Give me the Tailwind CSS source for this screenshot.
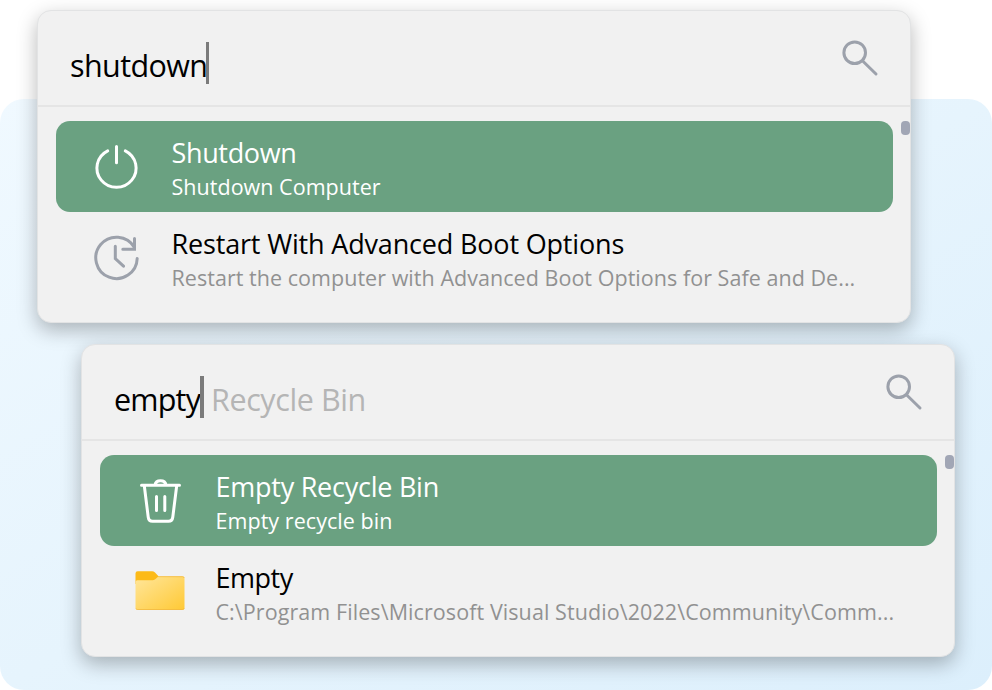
<!DOCTYPE html>
<html lang="en">
<head>
<meta charset="utf-8">
<title>Launcher</title>
<script src="https://cdn.jsdelivr.net/npm/@tailwindcss/browser@4"></script>
</head>
<body class="relative h-[690px] w-[992px] overflow-hidden bg-white font-['Open_Sans','Noto_Sans',sans-serif] whitespace-nowrap">
<div class="absolute inset-x-0 top-[99px] bottom-0 rounded-[24px] bg-linear-to-br from-[#f0f9ff] via-[#e6f4fd] to-[#dceffc]"></div>

<main class="relative flex flex-col gap-[21px] pt-[10px]">
  <section class="relative ml-[37px] h-[313px] w-[874px] rounded-[14px] border border-[#e2e3e4] bg-[#f1f1f1] shadow-[0_7px_20px_rgba(0,0,0,0.28)]">
    <header class="flex h-[96px] justify-between border-b-2 border-[#e5e5e5] pl-[32px] pr-[31px]">
      <div class="flex pt-[31px]">
        <span class="mt-[2px] w-[136px] text-[30.5px] leading-[42px] tracking-[-0.6px] text-black">shutdown</span>
        <span class="h-[42px] w-[3px] bg-[#7b7b7b]"></span>
      </div>
      <svg class="mt-[28px] size-[38px]" viewBox="0 0 38 38" fill="none" stroke="#9ca1ab" stroke-width="3" stroke-linecap="round"><circle cx="13.7" cy="13.7" r="10.8"/><path d="M21.700 22L35 35"/></svg>
    </header>
    <div class="ml-[18px] mt-[14px] flex w-[837px] flex-col">
      <div class="flex h-[91px] rounded-[14px] bg-[#6aa181] pt-[14px] text-white">
        <svg class="ml-[36px] mt-[7px] size-[50px]" viewBox="0 0 50 50" fill="none" stroke="white" stroke-width="3" stroke-linecap="round"><path d="M15.700 8.800A19.600 19.300 0 1 0 33.300 8.800M24.500 4.500V20.800"/></svg>
        <div class="ml-[29.5px]">
          <div class="h-[36px] text-[27px] leading-[36px] tracking-[-0.35px]">Shutdown</div>
          <div class="text-[21.5px] leading-[32px] tracking-[0.03px]">Shutdown Computer</div>
        </div>
      </div>
      <div class="flex h-[91px] pt-[14px]">
        <svg class="ml-[36px] mt-[7px] size-[50px]" viewBox="0 0 50 50" fill="none" stroke="#9ca1ab" stroke-width="3" stroke-linecap="round"><path d="M45.200 25.500A20.700 20.700 0 1 1 42.300 14.300M42.500 5.500V16.300H30.800M23.300 13.300V25.500L31.500 33.200"/></svg>
        <div class="ml-[29.5px]">
          <div class="h-[36px] text-[27px] leading-[36px] tracking-[-0.17px] text-black">Restart With Advanced Boot Options</div>
          <div class="text-[21.5px] leading-[32px] tracking-[0.04px] text-[#919191]">Restart the computer with Advanced Boot Options for Safe and De...</div>
        </div>
      </div>
    </div>
    <div class="absolute right-0 top-[110px] h-[14px] w-[9px] rounded-[4px] bg-[#a1a6b5]"></div>
  </section>

  <section class="relative ml-[81px] h-[313px] w-[874px] rounded-[14px] border border-[#e2e3e4] bg-[#f1f1f1] shadow-[0_7px_20px_rgba(0,0,0,0.28)]">
    <header class="flex h-[96px] justify-between border-b-2 border-[#e5e5e5] pl-[32px] pr-[31px]">
      <div class="flex pt-[31px]">
        <span class="mt-[2px] w-[86px] text-[30.5px] leading-[42px] tracking-[-0.8px] text-black">empty</span>
        <span class="h-[42px] w-[4px] bg-[#7b7b7b]"></span>
        <span class="ml-[7px] mt-[2px] text-[30.5px] leading-[42px] tracking-[-0.4px] text-[#b5b5b5]">Recycle Bin</span>
      </div>
      <svg class="mt-[28px] size-[38px]" viewBox="0 0 38 38" fill="none" stroke="#9ca1ab" stroke-width="3" stroke-linecap="round"><circle cx="13.700" cy="13.700" r="10.800"/><path d="M21.700 22L35 35"/></svg>
    </header>
    <div class="ml-[18px] mt-[14px] flex w-[837px] flex-col">
      <div class="flex h-[91px] rounded-[14px] bg-[#6aa181] pt-[14px] text-white">
        <svg class="ml-[36px] mt-[7px] size-[50px]" viewBox="0 0 50 50" fill="none" stroke="white" stroke-width="3" stroke-linecap="round" stroke-linejoin="round"><path d="M5.500 9.300H43.500M8.300 9.800L12.200 41Q12.700 45.300 16.500 45.300H32.500Q36.300 45.300 36.800 41L40.700 9.800M19 8.800C20 3.300 29 3.300 30 8.800M20.500 20.500V34.500M28.800 20.500V34.500"/></svg>
        <div class="ml-[29.5px]">
          <div class="h-[36px] text-[27px] leading-[36px] tracking-[-0.25px]">Empty Recycle Bin</div>
          <div class="text-[21.5px] leading-[32px] tracking-[0.05px]">Empty recycle bin</div>
        </div>
      </div>
      <div class="flex h-[91px] pt-[14px]">
        <svg class="ml-[35px] mt-[8px] h-[50px] w-[51px]" viewBox="0 0 51 50" fill="none">
          <defs><linearGradient id="folder" x1="0" y1="0" x2="1" y2="1"><stop offset="0" stop-color="#ffe69b"/><stop offset="1" stop-color="#ffc935"/></linearGradient></defs>
          <path d="M.5 5.500Q.5 3.300 2.700 3.300H17Q18.800 3.300 20 4.500L23.500 8.300H24V16H.5Z" fill="#fcba18"/>
          <path d="M.5 14Q.5 12.300 2.300 12.300H17.500Q19 12.300 20.200 11.300L22.500 9.300Q23.500 8.300 25 8.300H47.500Q49.500 8.300 49.500 10.300V40Q49.500 42 47.500 42H2.500Q.5 42 .5 40Z" fill="url(#folder)"/>
          <path d="M23.500 8.700H47.500Q49 8.700 49.200 10M1 40.500Q1.300 41.500 2.500 41.500H47.500Q49 41.500 49.200 40" stroke="#f3b940" stroke-width=".8"/>
        </svg>
        <div class="ml-[29.500px]">
          <div class="h-[36px] text-[27px] leading-[36px] tracking-[-0.5px] text-black">Empty</div>
          <div class="text-[21.5px] leading-[32px] tracking-[0.08px] text-[#919191]">C:\Program Files\Microsoft Visual Studio\2022\Community\Comm...</div>
        </div>
      </div>
    </div>
    <div class="absolute right-0 top-[110px] h-[14px] w-[9px] rounded-[4px] bg-[#a1a6b5]"></div>
  </section>
</main>
</body>
</html>
